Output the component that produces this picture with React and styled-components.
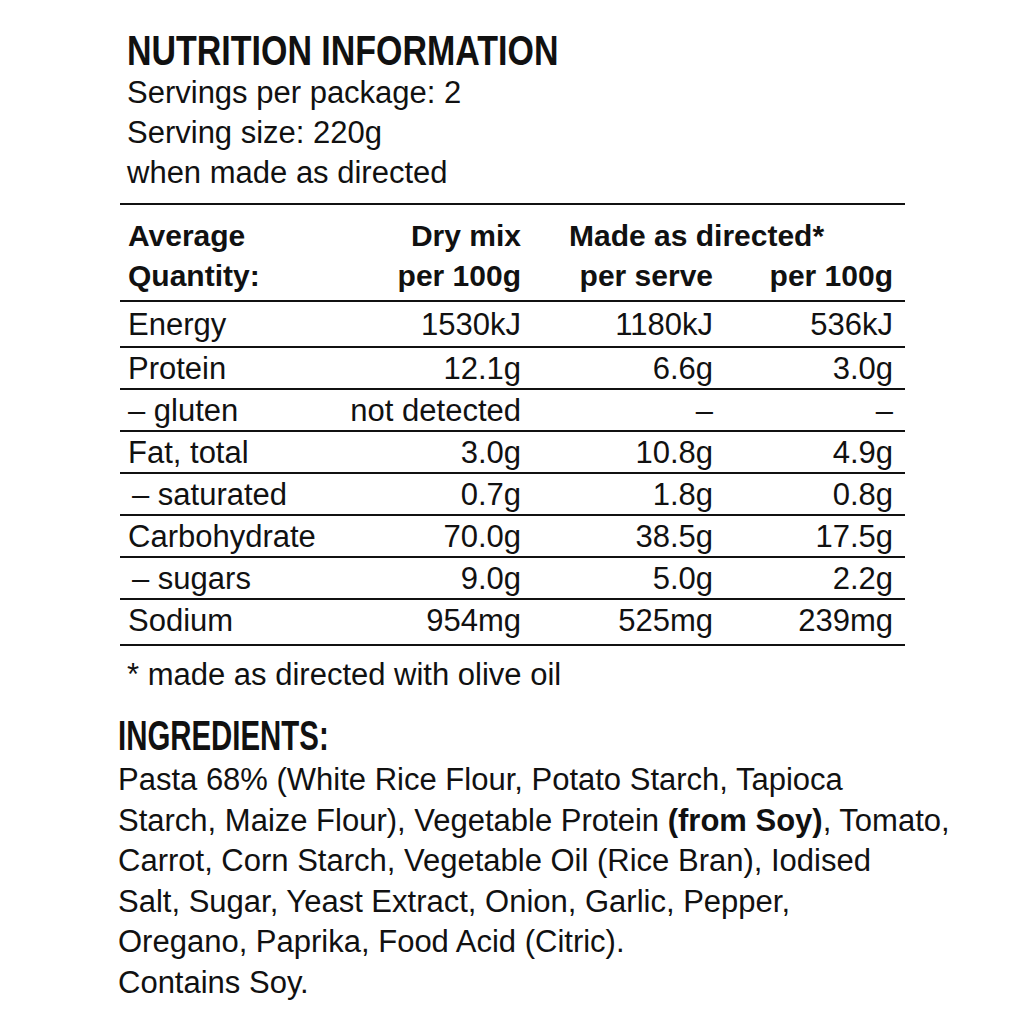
import React from 'react';
import styled, { createGlobalStyle } from 'styled-components';

const GlobalStyle = createGlobalStyle`
  html, body {
    margin: 0;
    padding: 0;
    background: #fff;
  }
  body {
    font-family: "Liberation Sans", Arial, sans-serif;
    color: #111;
  }
`;

const rows = [
  { name: 'Energy', dry: '1530kJ', serve: '1180kJ', per100: '536kJ' },
  { name: 'Protein', dry: '12.1g', serve: '6.6g', per100: '3.0g' },
  { name: '– gluten', dry: 'not detected', serve: '–', per100: '–' },
  { name: 'Fat, total', dry: '3.0g', serve: '10.8g', per100: '4.9g' },
  { name: '– saturated', dry: '0.7g', serve: '1.8g', per100: '0.8g', sub: true },
  { name: 'Carbohydrate', dry: '70.0g', serve: '38.5g', per100: '17.5g' },
  { name: '– sugars', dry: '9.0g', serve: '5.0g', per100: '2.2g', sub: true },
  { name: 'Sodium', dry: '954mg', serve: '525mg', per100: '239mg' },
];

const App = () => {
  return (
    <Page>
      <GlobalStyle />
      <Intro>
        <Heading>NUTRITION INFORMATION</Heading>
        <InfoLine>Servings per package: 2</InfoLine>
        <InfoLine>Serving size: 220g</InfoLine>
        <InfoLine>when made as directed</InfoLine>
      </Intro>

      <Table>
        <HeadRow>
          <HeadCell>Average<br />Quantity:</HeadCell>
          <HeadCell align="right">Dry mix<br />per 100g</HeadCell>
          <HeadGroup>
            <GroupTitle>Made as directed*</GroupTitle>
            <GroupCols>
              <HeadCell align="right">per serve</HeadCell>
              <HeadCell align="right">per 100g</HeadCell>
            </GroupCols>
          </HeadGroup>
        </HeadRow>
        {rows.map((r) => (
          <Row key={r.name}>
            <Label sub={r.sub}>{r.name}</Label>
            <Value>{r.dry}</Value>
            <Value>{r.serve}</Value>
            <Value>{r.per100}</Value>
          </Row>
        ))}
      </Table>

      <Footnote>* made as directed with olive oil</Footnote>

      <Ingredients>
        <SubHeading>INGREDIENTS:</SubHeading>
        <IngredientText>
          Pasta 68% (White Rice Flour, Potato Starch, Tapioca<br />
          Starch, Maize Flour), Vegetable Protein <b>(from Soy)</b>, Tomato,<br />
          Carrot, Corn Starch, Vegetable Oil (Rice Bran), Iodised<br />
          Salt, Sugar, Yeast Extract, Onion, Garlic, Pepper,<br />
          Oregano, Paprika, Food Acid (Citric).
        </IngredientText>
        <IngredientText>Contains Soy.</IngredientText>
      </Ingredients>
    </Page>
  );
};

const Page = styled.div`
  width: 787px;
  padding: 28px 0 0 118px;
`;

const Intro = styled.div`
  padding-left: 9px;
  padding-bottom: 10px;
`;

const Heading = styled.h1`
  margin: 0;
  font-weight: 700;
  font-size: 43px;
  line-height: 45px;
  white-space: nowrap;
  transform: scaleX(0.79);
  transform-origin: left center;
`;

const InfoLine = styled.div`
  font-size: 31px;
  line-height: 40px;
`;

const Table = styled.div`
  margin-left: 2px;
  width: 785px;
  border-top: 2px solid #111;
`;

const columns = `
  display: grid;
  grid-template-columns: 195px 200px 192px 180px;
  padding: 0 8px 0 8px;
  border-bottom: 2px solid #111;
`;

const HeadRow = styled.div`
  ${columns}
  padding-top: 11px;
  padding-bottom: 4px;
`;

const HeadCell = styled.div`
  font-weight: 700;
  font-size: 30px;
  line-height: 40px;
  text-align: ${(p) => p.align || 'left'};
  padding-right: ${(p) => (p.align === 'right' ? '2px' : '0')};
`;

const HeadGroup = styled.div`
  grid-column: 3 / 5;
`;

const GroupTitle = styled.div`
  font-weight: 700;
  font-size: 30px;
  line-height: 40px;
  padding-left: 46px;
`;

const GroupCols = styled.div`
  display: grid;
  grid-template-columns: 192px 180px;
`;

const Row = styled.div`
  ${columns}
  padding-top: 2px;
  font-size: 31px;
  line-height: 38px;

  &:nth-child(2) {
    padding-top: 4px;
    padding-bottom: 2px;
  }
  &:last-child {
    padding-bottom: 4px;
  }
`;

const Label = styled.div`
  white-space: nowrap;
  padding-left: ${(p) => (p.sub ? '4px' : '0')};
`;

const Value = styled.div`
  text-align: right;
  white-space: nowrap;
  padding-right: 2px;
`;

const Footnote = styled.div`
  padding: 9px 0 0 9px;
  font-size: 31px;
  line-height: 40px;
`;

const Ingredients = styled.div`
  padding-top: 20px;
`;

const SubHeading = styled.h2`
  margin: 0 0 3px;
  font-weight: 700;
  font-size: 42px;
  line-height: 42px;
  white-space: nowrap;
  transform: scaleX(0.7);
  transform-origin: left center;
`;

const IngredientText = styled.p`
  margin: 0;
  white-space: nowrap;
  font-size: 31px;
  line-height: 40.5px;

  & b {
    font-weight: 700;
  }
`;

export default App;
